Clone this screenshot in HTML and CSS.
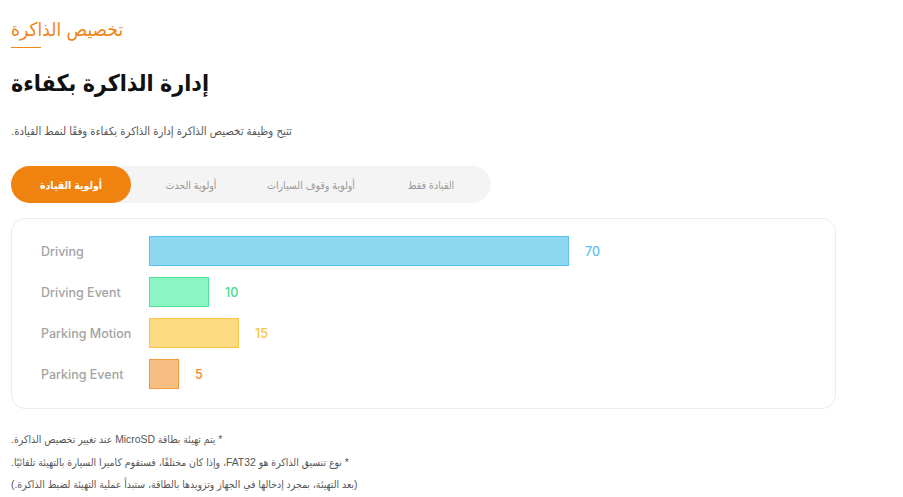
FILE: index.html
```html
<!DOCTYPE html>
<html lang="ar">

<head>
    <meta charset="UTF-8">
    <meta name="viewport" content="width=device-width, initial-scale=1.0">
    <title>تخصيص الذاكرة</title>
    <link rel="stylesheet" href="styles.css">
</head>

<body>
    <div class="page">
        <div class="eyebrow" dir="rtl">تخصيص الذاكرة</div>
        <div class="eyebrow-line"></div>
        <h1 class="title" dir="rtl">إدارة الذاكرة بكفاءة</h1>
        <p class="lead" dir="rtl">تتيح وظيفة تخصيص الذاكرة إدارة الذاكرة بكفاءة وفقًا لنمط القيادة.</p>

        <div class="tabs">
            <button class="tab active" dir="rtl">أولوية القيادة</button>
            <button class="tab" dir="rtl">أولوية الحدث</button>
            <button class="tab" dir="rtl">أولوية وقوف السيارات</button>
            <button class="tab" dir="rtl">القيادة فقط</button>
        </div>

        <div class="chart">
            <div class="chart-row">
                <span class="chart-label">Driving</span>
                <div class="bar driving" style="width: 420px"></div>
                <span class="chart-value driving">70</span>
            </div>
            <div class="chart-row">
                <span class="chart-label">Driving Event</span>
                <div class="bar event" style="width: 60px"></div>
                <span class="chart-value event">10</span>
            </div>
            <div class="chart-row">
                <span class="chart-label">Parking Motion</span>
                <div class="bar motion" style="width: 90px"></div>
                <span class="chart-value motion">15</span>
            </div>
            <div class="chart-row">
                <span class="chart-label">Parking Event</span>
                <div class="bar parking" style="width: 30px"></div>
                <span class="chart-value parking">5</span>
            </div>
        </div>

        <div class="notes">
            <p dir="rtl">* يتم تهيئة بطاقة MicroSD عند تغيير تخصيص الذاكرة.</p>
            <p dir="rtl">* نوع تنسيق الذاكرة هو FAT32، وإذا كان مختلفًا، فستقوم كاميرا السيارة بالتهيئة تلقائيًا.</p>
            <p dir="rtl">(بعد التهيئة، بمجرد إدخالها في الجهاز وتزويدها بالطاقة، ستبدأ عملية التهيئة لضبط الذاكرة.)</p>
        </div>
    </div>
</body>

</html>
```

FILE: styles.css
```css
body {
    margin: 0;
    background-color: #fff;
    font-family: "Liberation Sans", "DejaVu Sans Condensed", sans-serif;
    font-stretch: condensed;
    color: #111;
}

.page {
    padding: 18px 11px 0;
    width: 825px;
}

.eyebrow {
    font-size: 19px;
    color: #f08519;
    text-align: left;
    line-height: 24px;
}

.eyebrow-line {
    width: 30px;
    height: 1px;
    background-color: #f08519;
    margin-top: 5px;
}

.title {
    margin: 17px 0 0;
    font-size: 23px;
    font-weight: bold;
    line-height: 36px;
    text-align: left;
}

.lead {
    margin: 21px 0 0;
    font-size: 11.3px;
    line-height: 18px;
    color: #555;
    text-align: left;
}

.tabs {
    display: flex;
    width: 480px;
    height: 37px;
    margin-top: 26px;
    background-color: #f4f4f4;
    border-radius: 19px;
}

.tab {
    width: 120px;
    border: none;
    background: none;
    border-radius: 19px;
    font-family: inherit;
    font-size: 10.5px;
    color: #999;
    cursor: pointer;
}

.tab.active {
    background-color: #f08210;
    color: #fff;
    font-weight: bold;
}

.chart {
    margin-top: 15px;
    border: 1px solid #ececec;
    border-radius: 14px;
    padding: 17px 0 19px 29px;
    display: flex;
    flex-direction: column;
    gap: 11px;
}

.chart-row {
    display: flex;
    align-items: center;
    height: 30px;
}

.chart-label {
    width: 108px;
    font-family: Inter, sans-serif;
    font-size: 12.5px;
    font-weight: 500;
    color: #a3a3a3;
}

.bar {
    box-sizing: border-box;
    height: 30px;
    border: 1px solid;
}

.chart-value {
    margin-left: 16px;
    font-family: Inter, sans-serif;
    font-size: 12.5px;
    font-weight: 500;
}

.bar.driving {
    background-color: #8ed8f1;
    border-color: #5ac4ec;
}

.chart-value.driving {
    color: #5bc2ec;
}

.bar.event {
    background-color: #8bf5c4;
    border-color: #4fe49c;
}

.chart-value.event {
    color: #3fdc8f;
}

.bar.motion {
    background-color: #fddb83;
    border-color: #f9c542;
}

.chart-value.motion {
    color: #f7c43e;
}

.bar.parking {
    background-color: #f6bd80;
    border-color: #f19a3c;
}

.chart-value.parking {
    color: #f08a2c;
}

.notes {
    margin-top: 20px;
}

.notes p {
    margin: 0;
    font-size: 10.4px;
    line-height: 22.5px;
    color: #555;
    text-align: left;
}
```
